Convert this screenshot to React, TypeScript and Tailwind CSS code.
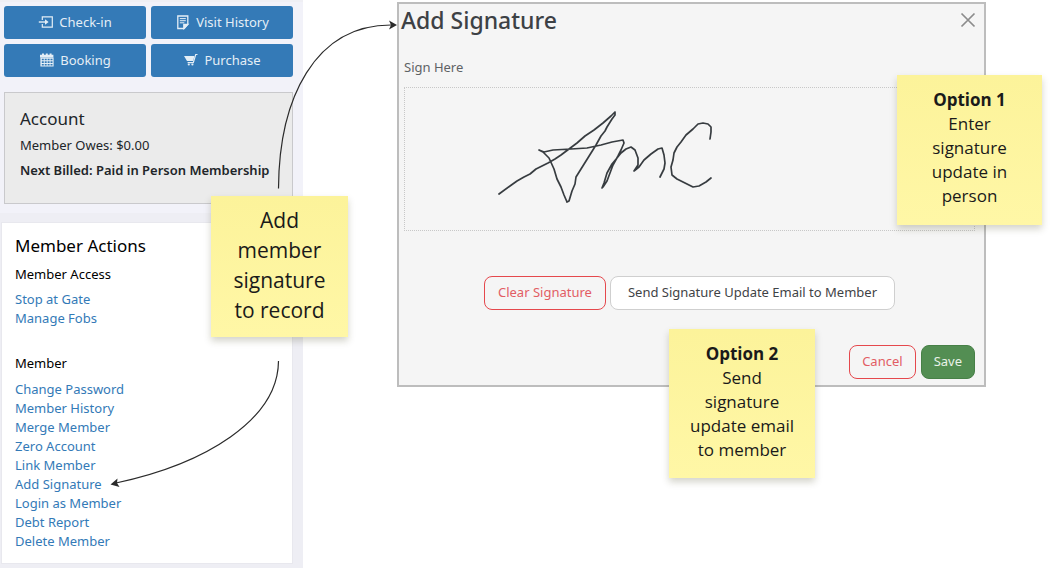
import type { ReactNode } from 'react';
import { useState } from 'react';

const accessLinks = ['Stop at Gate', 'Manage Fobs'];

const memberLinks = [
  'Change Password',
  'Member History',
  'Merge Member',
  'Zero Account',
  'Link Member',
  'Add Signature',
  'Login as Member',
  'Debt Report',
  'Delete Member',
];

function CheckInIcon() {
  return (
    <svg className="w-4 h-4" viewBox="0 0 16 16" fill="none" stroke="currentColor" strokeWidth={1.2} aria-hidden="true">
      <path d="M4.3 5V1.8h10v10.4h-10V9" />
      <path d="M0.8 7h7" strokeWidth={1.4} />
      <path d="M7 4.2l3.6 2.8L7 9.8z" fill="currentColor" stroke="none" />
    </svg>
  );
}

function HistoryIcon() {
  return (
    <svg className="w-4 h-4" viewBox="0 0 16 16" fill="none" stroke="currentColor" strokeWidth={1.3} aria-hidden="true">
      <path d="M2.8 1h10v8.2l-3.6 4.3H2.8z" />
      <path d="M8.8 13.5V9.4h4z" fill="currentColor" />
      <path d="M4.8 3.6h6M4.8 5.7h6M4.8 7.8h4.5" strokeWidth={1} />
    </svg>
  );
}

function CalendarIcon() {
  return (
    <svg className="w-4 h-4" viewBox="0 0 16 16" fill="currentColor" aria-hidden="true">
      <path d="M1 1.8h2V.5h2v1.3h1.800V.5h2v1.3h1.800V.5h2v1.3h1.800V4.600H1z" />
      <path
        fillRule="evenodd"
        d="M1.4 4.6h13.2v9H1.4zM2.8 5.7v1.6h2V5.7zm2.9 0v1.6h2V5.7zm2.9 0v1.6h2V5.7zm2.9 0v1.6h2V5.7zM2.8 8.3v1.6h2V8.3zm2.9 0v1.6h2V8.3zm2.9 0v1.6h2V8.3zm2.9 0v1.6h2V8.3zM2.8 10.9v1.6h2v-1.6zm2.9 0v1.6h2v-1.6zm2.9 0v1.6h2v-1.6zm2.9 0v1.6h2v-1.6z"
      />
    </svg>
  );
}

function CartIcon() {
  return (
    <svg className="w-4 h-4" viewBox="0 0 16 16" fill="currentColor" aria-hidden="true">
      <path d="M1 3h10.4L10.200 8H4z" />
      <path d="M14.5 1.5h-1.8L10.300 9.600H4.600" fill="none" stroke="currentColor" strokeWidth={1.2} />
      <circle cx="5.8" cy="11.5" r="1.1" />
      <circle cx="9.4" cy="11.5" r="1.1" />
    </svg>
  );
}

function QuickButton({ icon, label }: { icon: ReactNode; label: string }) {
  return (
    <button className="flex items-center justify-center gap-[5px] h-[33px] rounded-[3px] bg-[#347ab7] text-[#e4eef6] cursor-pointer">
      {icon}
      <span>{label}</span>
    </button>
  );
}

function LinkList({ links }: { links: string[] }) {
  return (
    <ul>
      {links.map((link) => (
        <li key={link} className="leading-[19px]">
          <a href="#" className="text-[#337ab7] hover:underline">
            {link}
          </a>
        </li>
      ))}
    </ul>
  );
}

function StickyNote({ className, children }: { className: string; children: ReactNode }) {
  return (
    <div
      className={`absolute bg-linear-to-b from-[#fcf39a] to-[#fff7a6] shadow-[0_4px_7px_rgba(60,60,20,0.22)] text-center text-[#1a1a1a] font-['Open_Sans',sans-serif] ${className}`}
    >
      {children}
    </div>
  );
}

function Sidebar() {
  return (
    <aside className="w-[303px] shrink-0 border-t-2 border-[#efeff4] bg-[#eeeef4] text-[13px] text-[#212529]">
      <div className="bg-[#f2f2f9] pl-1 pr-[10px] pt-1 pb-[9px]">
        <div className="grid grid-cols-2 gap-x-[5px] gap-y-[5px]">
          <QuickButton icon={<CheckInIcon />} label="Check-in" />
          <QuickButton icon={<HistoryIcon />} label="Visit History" />
          <QuickButton icon={<CalendarIcon />} label="Booking" />
          <QuickButton icon={<CartIcon />} label="Purchase" />
        </div>

        {/* Account summary */}
        <section className="mt-[15px] h-[112px] border border-[#c9c9cc] bg-[#ebebeb] px-[15px] pt-3">
          <h2 className="text-[17px] leading-7">Account</h2>
          <p className="leading-[25px]">Member Owes: $0.00</p>
          <p className="leading-[25px] font-semibold whitespace-nowrap">Next Billed: Paid in Person Membership</p>
        </section>
      </div>

      {/* Member actions */}
      <section className="mt-[9px] mb-1 ml-px mr-[10px] border border-[#e8e8ee] bg-white px-[13px] pt-[7px] pb-3 text-black">
        <h2 className="text-[17px] leading-8">Member Actions</h2>
        <h3 className="leading-[25px] mb-[3px]">Member Access</h3>
        <LinkList links={accessLinks} />
        <h3 className="leading-[25px] mt-[23px] mb-1">Member</h3>
        <LinkList links={memberLinks} />
      </section>
    </aside>
  );
}

function SignatureDialog({ onClose }: { onClose: () => void }) {
  return (
    <div
      role="dialog"
      aria-labelledby="dialog-title"
      className="relative border-2 border-[#bdbdbd] bg-[#f5f5f5] px-[5px] text-[13px]"
    >
      <div className="flex items-center justify-between pr-[3px]">
        <h1 id="dialog-title" className="-ml-[3px] text-[23px] leading-8 font-medium text-[#3d4145]">
          Add Signature
        </h1>
        <button onClick={onClose} aria-label="Close" className="text-[#8c8c8c] cursor-pointer">
          <svg className="w-4 h-4" viewBox="0 0 16 16" fill="none" stroke="currentColor" strokeWidth={1.7}>
            <path d="M1.5 1.5l13 13M14.5 1.5l-13 13" />
          </svg>
        </button>
      </div>

      <p className="mt-[19px] leading-6 text-[#5e6265]">Sign Here</p>
      <div className="mt-2 mr-1 h-[144px] border border-dotted border-[#c8c8c8]">
        <svg
          className="ml-[76px] mt-px w-[250px] h-[130px]"
          viewBox="0 0 250 130"
          fill="none"
          stroke="#373c40"
          strokeWidth={1.7}
          strokeLinecap="round"
          strokeLinejoin="round"
          role="img"
          aria-label="Signature"
        >
          <path d="M18 105L29 97L36 92L43 88L49 85L55 80L61 77L67 74L74 70L80 66L88 60L96 54L104 47L113 41L122 34L130 27L134 23L134 26L131 30L126 38L124 42L120 47L115 56L110 64L105 72L100 80L95 88L94 95L91 102L88 112L86 113L83 106L80 98L76 90L73 80L68 69L65 66L62 63L58 61L63 63L72 61L90 60L106 59L120 56L131 53L142 51L143 54L140 61L137 67L132 76L129 84L126 92L122 98L121 99L123 94L126 84L131 75L136 69L140 64L145 60L150 58L154 61L157 69L157 76L153 82L158 78L163 71L170 65L177 60L181 59L183 66L184 74L183 80L179 88" />
          <path d="M229 50L230 43L230 38L227 35L222 34L217 35L212 40L205 46L200 53L196 58L193 64L192 71L190 78L191 86L196 90L204 94L212 98L218 97L225 93L230 89" />
        </svg>
      </div>

      <div className="mt-[45px] flex justify-center gap-1 pr-1">
        <button className="h-[34px] rounded-lg border border-[#e5484d] px-[13px] text-[#e25d64] cursor-pointer">
          Clear Signature
        </button>
        <button className="h-[34px] rounded-lg border border-[#cfcfcf] bg-white px-[17px] text-[#3f4346] cursor-pointer">
          Send Signature Update Email to Member
        </button>
      </div>

      <div className="mt-[35px] mb-[6px] flex justify-end gap-[5px] pr-1">
        <button onClick={onClose} className="h-[34px] rounded-lg border border-[#e5484d] px-3 text-[#e25d64] cursor-pointer">
          Cancel
        </button>
        <button className="h-[34px] rounded-lg border border-[#478047] bg-[#538e53] px-3 text-[#e9f2e9] cursor-pointer">Save</button>
      </div>

      <StickyNote className="top-[71px] -right-[58px] w-[145px] h-[150px] px-6 pt-[13px] text-[17px] leading-6">
        <strong className="block font-bold">Option 1</strong>
        Enter signature update in person
      </StickyNote>
      <StickyNote className="top-[325px] right-[169px] w-[146px] h-[149px] px-4 pt-[13px] text-[17px] leading-6">
        <strong className="block font-bold">Option 2</strong>
        Send signature update email to member
      </StickyNote>
    </div>
  );
}

export default function App() {
  const [dialogOpen, setDialogOpen] = useState(true);

  return (
    <div className="relative flex items-start min-h-screen overflow-hidden bg-white font-['Noto_Sans',sans-serif]">
      <Sidebar />

      <main className="flex-1 ml-[94px] mr-[65px] mt-[2px]">
        {dialogOpen && <SignatureDialog onClose={() => setDialogOpen(false)} />}
      </main>

      {/* Connector arrows between the note, the link and the dialog */}
      <svg
        className="absolute left-0 top-0 pointer-events-none"
        width="420"
        height="500"
        viewBox="0 0 420 500"
        fill="none"
        stroke="#2b2b2b"
        strokeWidth={1.2}
        aria-hidden="true"
      >
        <path d="M278.500 188.500C279 98 315 25 391 25" />
        <path d="M397 25l-8-4.500 2 4.500-2 4.500z" fill="#2b2b2b" stroke="none" />
        <path d="M278.500 361C278 420 205 464 116 483" />
        <path d="M110.500 484.500l7-6-.5 4.500 2.500 4z" fill="#2b2b2b" stroke="none" />
      </svg>

      <StickyNote className="left-[211px] top-[196px] w-[137px] h-[141px] px-4 pt-[9px] text-[21px] leading-[30px]">
        Add member signature to record
      </StickyNote>
    </div>
  );
}
